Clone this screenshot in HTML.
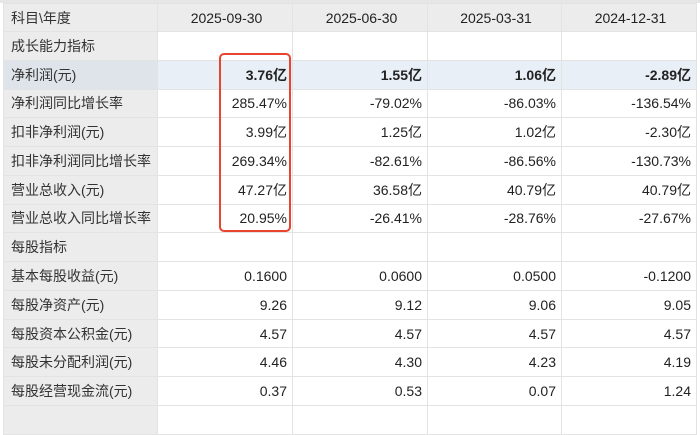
<!DOCTYPE html>
<html><head><meta charset="utf-8"><style>
body{margin:0;width:700px;height:410px;overflow:hidden;background:#fff;font-family:"Liberation Sans","Noto Sans CJK SC",sans-serif;font-size:14px;color:#222;position:relative}
table{position:absolute;left:3px;top:3px;border-collapse:collapse;table-layout:fixed}
td{border:1px solid #e3e3e3;height:28.77px;padding:0 5px 0 8px;text-align:right;white-space:nowrap;box-sizing:border-box}
td:first-child{text-align:left;background:#ececec;color:#333;padding-left:7px}
tr.h td{background:#ececec;text-align:center;height:28px}
tr.h td:first-child{text-align:left}
tr.hl td{background:#e9eff6;font-weight:bold}
tr.hl td:first-child{background:#dfe4ea;font-weight:normal}
.box{position:absolute;left:219px;top:53px;width:68px;height:175px;border:2px solid #e8442f;border-radius:5px}
.top{position:absolute;left:0;top:0;width:700px;height:3px;background:#e6e6e6}
</style></head><body>
<div class="top"></div>
<table>
<colgroup><col style="width:154px"><col style="width:135px"><col style="width:135px"><col style="width:134px"><col style="width:135px"></colgroup>
<tr class="h"><td>科目\年度</td><td>2025-09-30</td><td>2025-06-30</td><td>2025-03-31</td><td>2024-12-31</td></tr>
<tr><td>成长能力指标</td><td></td><td></td><td></td><td></td></tr>
<tr class="hl"><td>净利润(元)</td><td>3.76亿</td><td>1.55亿</td><td>1.06亿</td><td>-2.89亿</td></tr>
<tr><td>净利润同比增长率</td><td>285.47%</td><td>-79.02%</td><td>-86.03%</td><td>-136.54%</td></tr>
<tr><td>扣非净利润(元)</td><td>3.99亿</td><td>1.25亿</td><td>1.02亿</td><td>-2.30亿</td></tr>
<tr><td>扣非净利润同比增长率</td><td>269.34%</td><td>-82.61%</td><td>-86.56%</td><td>-130.73%</td></tr>
<tr><td>营业总收入(元)</td><td>47.27亿</td><td>36.58亿</td><td>40.79亿</td><td>40.79亿</td></tr>
<tr><td>营业总收入同比增长率</td><td>20.95%</td><td>-26.41%</td><td>-28.76%</td><td>-27.67%</td></tr>
<tr><td>每股指标</td><td></td><td></td><td></td><td></td></tr>
<tr><td>基本每股收益(元)</td><td>0.1600</td><td>0.0600</td><td>0.0500</td><td>-0.1200</td></tr>
<tr><td>每股净资产(元)</td><td>9.26</td><td>9.12</td><td>9.06</td><td>9.05</td></tr>
<tr><td>每股资本公积金(元)</td><td>4.57</td><td>4.57</td><td>4.57</td><td>4.57</td></tr>
<tr><td>每股未分配利润(元)</td><td>4.46</td><td>4.30</td><td>4.23</td><td>4.19</td></tr>
<tr><td>每股经营现金流(元)</td><td>0.37</td><td>0.53</td><td>0.07</td><td>1.24</td></tr>
<tr><td></td><td></td><td></td><td></td><td></td></tr>
</table>
<div class="box"></div>
</body></html>
